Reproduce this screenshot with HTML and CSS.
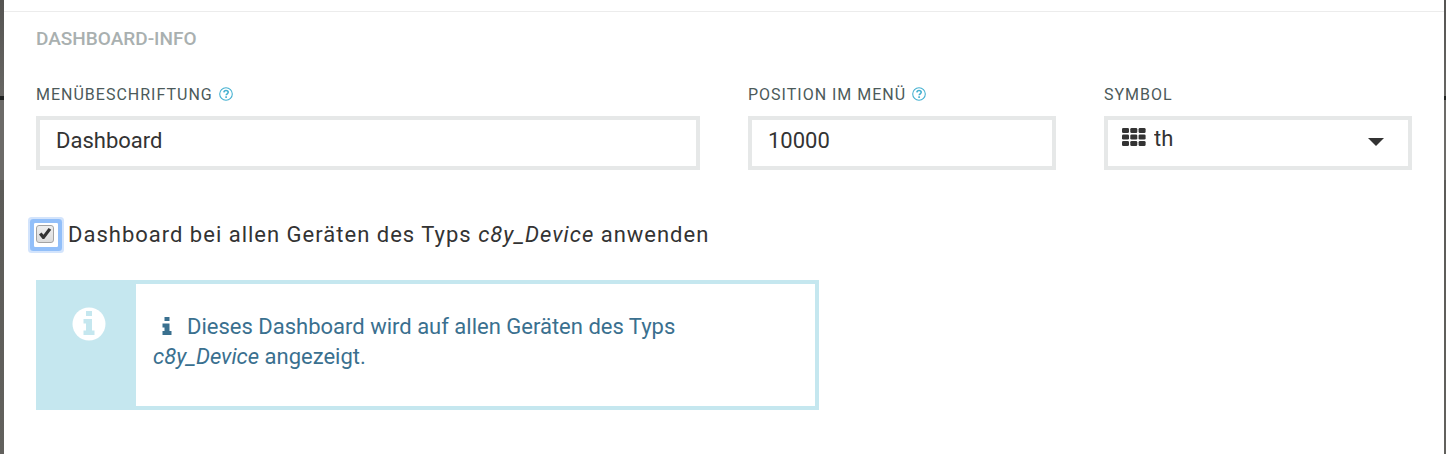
FILE: index.html
```html
<!DOCTYPE html>
<html lang="de">
<head>
<meta charset="utf-8">
<title>Dashboard-Info</title>
<link rel="stylesheet" href="styles.css">
</head>
<body>
<main class="modal">
  <div class="modal-header"></div>
  <form class="modal-body">
    <h2 class="legend">DASHBOARD-INFO</h2>
    <div class="fields">
      <div class="field field-wide">
        <div class="field-head">
          <label for="menu-label">MENÜBESCHRIFTUNG</label>
          <svg class="help" viewBox="0 0 14 14" aria-hidden="true"><circle cx="7" cy="7" r="6.3"/><path d="M4.900 5.400C5 4.100 5.900 3.500 7 3.500c1.300 0 2.200.7 2.200 1.800 0 1.500-2 1.500-2 3"/><path d="M7.100 9.300v1.700"/></svg>
        </div>
        <input class="control" id="menu-label" type="text" value="Dashboard">
      </div>
      <div class="field">
        <div class="field-head">
          <label for="menu-position">POSITION IM MENÜ</label>
          <svg class="help" viewBox="0 0 14 14" aria-hidden="true"><circle cx="7" cy="7" r="6.3"/><path d="M4.900 5.400C5 4.100 5.900 3.500 7 3.500c1.300 0 2.200.7 2.200 1.800 0 1.500-2 1.500-2 3"/><path d="M7.100 9.300v1.700"/></svg>
        </div>
        <input class="control" id="menu-position" type="text" value="10000">
      </div>
      <div class="field">
        <div class="field-head"><label for="symbol">SYMBOL</label></div>
        <div class="picker">
          <select class="control control-select" id="symbol"><option>th</option></select>
          <svg class="grid-icon" viewBox="0 0 24 18" aria-hidden="true"><rect x="0" y="0" width="7" height="5" rx="1.300"/><rect x="8.300" y="0" width="7" height="5" rx="1.300"/><rect x="16.600" y="0" width="7" height="5" rx="1.300"/><rect x="0" y="6.500" width="7" height="5" rx="1.300"/><rect x="8.300" y="6.500" width="7" height="5" rx="1.300"/><rect x="16.600" y="6.500" width="7" height="5" rx="1.300"/><rect x="0" y="13" width="7" height="5" rx="1.300"/><rect x="8.300" y="13" width="7" height="5" rx="1.300"/><rect x="16.600" y="13" width="7" height="5" rx="1.300"/></svg>
          <svg class="caret" viewBox="0 0 16 8" aria-hidden="true"><path d="M0 0h16L8 8z"/></svg>
        </div>
      </div>
    </div>
    <div class="check-row">
      <span class="check">
        <input class="check-box" type="checkbox" id="apply-all" checked>
        <svg class="check-mark" viewBox="0 0 18 18" aria-hidden="true"><path d="M3 9.500 5.500 7.500l2 2.200L12.600 3l2.600 1.800-7 9.200H6.600z"/></svg>
      </span>
      <label class="check-label" for="apply-all">Dashboard bei allen Geräten des Typs <em>c8y_Device</em> anwenden</label>
    </div>
    <div class="alert" role="note">
      <div class="alert-side">
        <svg class="alert-icon" viewBox="0 0 34 34" aria-hidden="true"><circle cx="17" cy="17" r="16.500"/><path d="M14 4h6v5h-6zM11.500 12H20v11.500h2.500V28h-11v-4.500H14v-7h-2.500z"/></svg>
      </div>
      <p class="alert-text"><svg class="info-icon" viewBox="0 0 10 18" aria-hidden="true"><path d="M2.500 0h5v4h-5zM.5 6.500h7V14H9.500v4H.5v-4h2v-3.500h-2z"/></svg>Dieses Dashboard wird auf allen Geräten des Typs <em>c8y_Device</em> angezeigt.</p>
    </div>
  </form>
</main>
</body>
</html>
```
FILE: styles.css
```css
* { box-sizing: border-box; }

body {
  margin: 0;
  padding: 0 2px 0 4px;
  background: linear-gradient(#555452 0, #676663 96px, #202322 96px, #202322 100px, #6c6b68 100px, #6c6b68 180px, #5c5b58 180px, #62615d 100%);
  font-family: Roboto, "Liberation Sans", sans-serif;
  font-size: 22px;
  color: #333;
}

.modal { min-height: 100vh; background: #fff; }
.modal-header { height: 12px; border-bottom: 1px solid #ececec; }
.modal-body { padding: 15px 32px 44px; }

.legend {
  margin: 0;
  font-size: 19px;
  font-weight: 500;
  line-height: 24px;
  color: #a9b0b0;
}

.fields {
  display: grid;
  grid-template-columns: repeat(4, minmax(0, 1fr));
  gap: 48px;
  margin-top: 33px;
}
.field-wide { grid-column: span 2; }

.field-head {
  display: flex;
  align-items: center;
  gap: 6px;
  height: 20px;
  margin-bottom: 12px;
  font-size: 16px;
  letter-spacing: 1px;
  color: #4c5a5a;
}
.help {
  width: 14px;
  height: 14px;
  fill: none;
  stroke: #45b1d1;
  stroke-width: 1.6;
}
.help circle { stroke-width: 1.1; }

.control {
  display: block;
  width: 100%;
  height: 54px;
  padding: 0 16px 6px;
  border: 4px solid #e6e8e8;
  border-radius: 0;
  background: #fff;
  font: inherit;
  color: #333;
}
.picker { position: relative; }
.control-select {
  appearance: none;
  padding: 0 46px 10px;
}
.grid-icon {
  position: absolute;
  left: 18px;
  top: 12px;
  width: 24px;
  height: 18px;
  fill: #333;
  pointer-events: none;
}
.caret {
  position: absolute;
  right: 28px;
  top: 22px;
  width: 16px;
  height: 8px;
  fill: #333;
  pointer-events: none;
}

.check-row {
  display: flex;
  align-items: center;
  gap: 10px;
  margin-top: 50px;
  margin-left: -2px;
  line-height: 30px;
}
.check {
  position: relative;
  width: 24px;
  height: 24px;
  padding: 2px;
  border-radius: 1px;
  box-shadow: 0 0 0 4px #92bff9, 0 0 0 6px #d3e4fc;
}
.check-box {
  appearance: none;
  display: block;
  width: 18px;
  height: 18px;
  margin: 0;
  border: 1px solid #a3a3a3;
  border-radius: 3px;
  background: linear-gradient(#eee, #dcdcdc);
  outline: none;
}
.check-mark {
  position: absolute;
  left: 2px;
  top: 2px;
  width: 18px;
  height: 18px;
  fill: #333;
  pointer-events: none;
}
.check-label { letter-spacing: 1px; }

.alert {
  display: grid;
  grid-template-columns: 96px 1fr;
  width: calc((100% + 48px) * 7 / 12 - 48px);
  min-height: 130px;
  margin-top: 30px;
  border: 4px solid #c5e7ef;
}
.alert-side {
  padding-top: 23px;
  padding-left: 32px;
  background: #c5e7ef;
}
.alert-icon {
  display: block;
  width: 34px;
  height: 34px;
  fill: #fff;
}
.alert-icon path { fill: #c5e7ef; }
.alert-text {
  margin: 0;
  padding: 28px 32px 24px 17px;
  line-height: 30px;
  color: #3a708f;
}
.info-icon {
  width: 10px;
  height: 18px;
  margin: 0 15px 0 9px;
  vertical-align: -1px;
  fill: #3a708f;
}
```
